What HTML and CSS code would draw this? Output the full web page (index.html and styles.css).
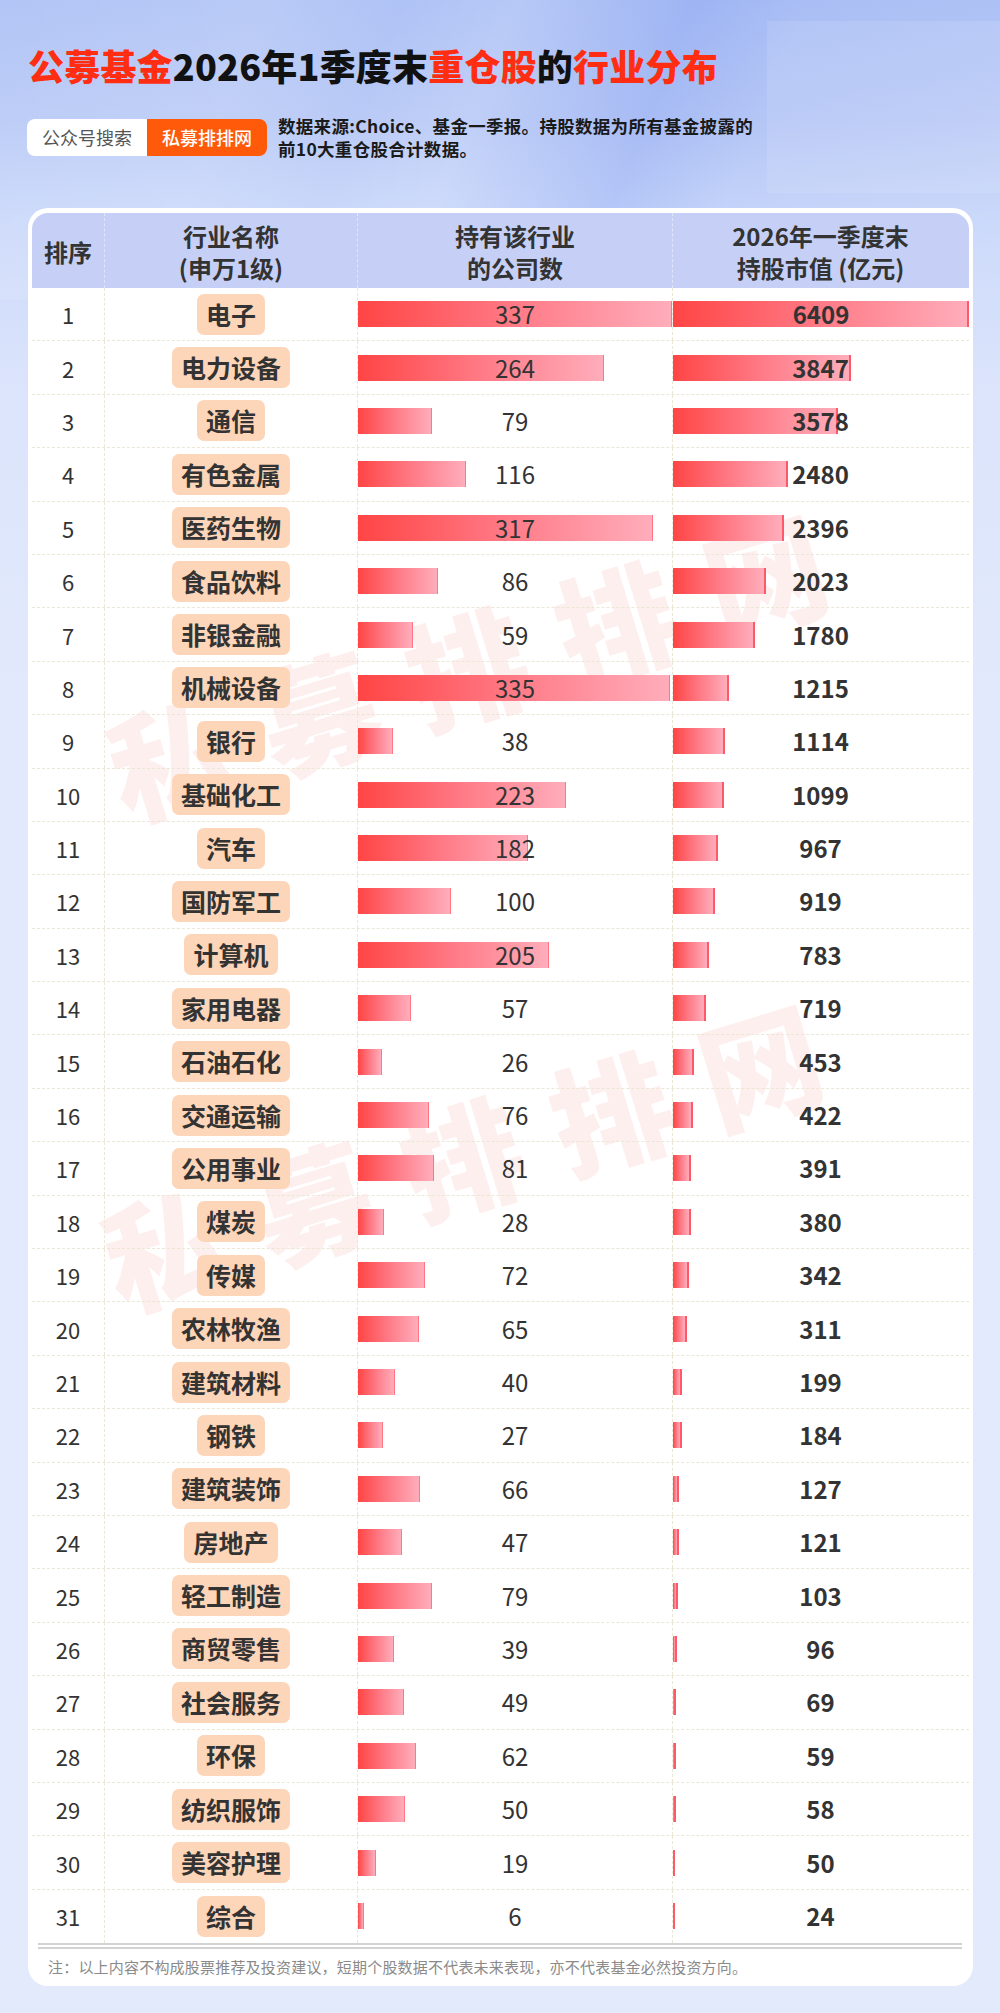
FILE: index.html
```html
<!DOCTYPE html>
<html lang="zh-CN">
<head>
<meta charset="utf-8">
<title>公募基金2026年1季度末重仓股的行业分布</title>
<link rel="stylesheet" href="styles.css">
</head>
<body>
<div class="page">
  <header class="top">
    <h1 class="title"><span class="red">公募基金</span>2026年1季度末<span class="red">重仓股</span>的<span class="red">行业分布</span></h1>
    <div class="meta">
      <div class="badge"><span class="badge-l">公众号搜索</span><span class="badge-r">私募排排网</span></div>
      <p class="source">数据来源:Choice、基金一季报。持股数据为所有基金披露的<br>前10大重仓股合计数据。</p>
    </div>
  </header>

  <section class="card">
    <div class="wm wm1">私募排排网</div>
    <div class="wm wm2">私募排排网</div>

    <div class="thead">
      <div class="th">排序</div>
      <div class="th">行业名称<br>(申万1级)</div>
      <div class="th">持有该行业<br>的公司数</div>
      <div class="th">2026年一季度末<br>持股市值 (亿元)</div>
    </div>

    <div class="tbody">
      <div class="row"><div class="c-rank">1</div><div class="c-name"><span class="pill">电子</span></div><div class="c-bar"><span class="bar" style="width:314px"></span><span class="num">337</span></div><div class="c-bar c-val"><span class="bar vbar" style="width:296px"></span><span class="num">6409</span></div></div>
      <div class="row"><div class="c-rank">2</div><div class="c-name"><span class="pill">电力设备</span></div><div class="c-bar"><span class="bar" style="width:246px"></span><span class="num">264</span></div><div class="c-bar c-val"><span class="bar vbar" style="width:177.7px"></span><span class="num">3847</span></div></div>
      <div class="row"><div class="c-rank">3</div><div class="c-name"><span class="pill">通信</span></div><div class="c-bar"><span class="bar" style="width:73.6px"></span><span class="num">79</span></div><div class="c-bar c-val"><span class="bar vbar" style="width:165.3px"></span><span class="num">3578</span></div></div>
      <div class="row"><div class="c-rank">4</div><div class="c-name"><span class="pill">有色金属</span></div><div class="c-bar"><span class="bar" style="width:108.1px"></span><span class="num">116</span></div><div class="c-bar c-val"><span class="bar vbar" style="width:114.5px"></span><span class="num">2480</span></div></div>
      <div class="row"><div class="c-rank">5</div><div class="c-name"><span class="pill">医药生物</span></div><div class="c-bar"><span class="bar" style="width:295.4px"></span><span class="num">317</span></div><div class="c-bar c-val"><span class="bar vbar" style="width:110.7px"></span><span class="num">2396</span></div></div>
      <div class="row"><div class="c-rank">6</div><div class="c-name"><span class="pill">食品饮料</span></div><div class="c-bar"><span class="bar" style="width:80.1px"></span><span class="num">86</span></div><div class="c-bar c-val"><span class="bar vbar" style="width:93.4px"></span><span class="num">2023</span></div></div>
      <div class="row"><div class="c-rank">7</div><div class="c-name"><span class="pill">非银金融</span></div><div class="c-bar"><span class="bar" style="width:55px"></span><span class="num">59</span></div><div class="c-bar c-val"><span class="bar vbar" style="width:82.2px"></span><span class="num">1780</span></div></div>
      <div class="row"><div class="c-rank">8</div><div class="c-name"><span class="pill">机械设备</span></div><div class="c-bar"><span class="bar" style="width:312.1px"></span><span class="num">335</span></div><div class="c-bar c-val"><span class="bar vbar" style="width:56.1px"></span><span class="num">1215</span></div></div>
      <div class="row"><div class="c-rank">9</div><div class="c-name"><span class="pill">银行</span></div><div class="c-bar"><span class="bar" style="width:35.4px"></span><span class="num">38</span></div><div class="c-bar c-val"><span class="bar vbar" style="width:51.5px"></span><span class="num">1114</span></div></div>
      <div class="row"><div class="c-rank">10</div><div class="c-name"><span class="pill">基础化工</span></div><div class="c-bar"><span class="bar" style="width:207.8px"></span><span class="num">223</span></div><div class="c-bar c-val"><span class="bar vbar" style="width:50.8px"></span><span class="num">1099</span></div></div>
      <div class="row"><div class="c-rank">11</div><div class="c-name"><span class="pill">汽车</span></div><div class="c-bar"><span class="bar" style="width:169.6px"></span><span class="num">182</span></div><div class="c-bar c-val"><span class="bar vbar" style="width:44.7px"></span><span class="num">967</span></div></div>
      <div class="row"><div class="c-rank">12</div><div class="c-name"><span class="pill">国防军工</span></div><div class="c-bar"><span class="bar" style="width:93.2px"></span><span class="num">100</span></div><div class="c-bar c-val"><span class="bar vbar" style="width:42.4px"></span><span class="num">919</span></div></div>
      <div class="row"><div class="c-rank">13</div><div class="c-name"><span class="pill">计算机</span></div><div class="c-bar"><span class="bar" style="width:191px"></span><span class="num">205</span></div><div class="c-bar c-val"><span class="bar vbar" style="width:36.2px"></span><span class="num">783</span></div></div>
      <div class="row"><div class="c-rank">14</div><div class="c-name"><span class="pill">家用电器</span></div><div class="c-bar"><span class="bar" style="width:53.1px"></span><span class="num">57</span></div><div class="c-bar c-val"><span class="bar vbar" style="width:33.2px"></span><span class="num">719</span></div></div>
      <div class="row"><div class="c-rank">15</div><div class="c-name"><span class="pill">石油石化</span></div><div class="c-bar"><span class="bar" style="width:24.2px"></span><span class="num">26</span></div><div class="c-bar c-val"><span class="bar vbar" style="width:20.9px"></span><span class="num">453</span></div></div>
      <div class="row"><div class="c-rank">16</div><div class="c-name"><span class="pill">交通运输</span></div><div class="c-bar"><span class="bar" style="width:70.8px"></span><span class="num">76</span></div><div class="c-bar c-val"><span class="bar vbar" style="width:19.5px"></span><span class="num">422</span></div></div>
      <div class="row"><div class="c-rank">17</div><div class="c-name"><span class="pill">公用事业</span></div><div class="c-bar"><span class="bar" style="width:75.5px"></span><span class="num">81</span></div><div class="c-bar c-val"><span class="bar vbar" style="width:18.1px"></span><span class="num">391</span></div></div>
      <div class="row"><div class="c-rank">18</div><div class="c-name"><span class="pill">煤炭</span></div><div class="c-bar"><span class="bar" style="width:26.1px"></span><span class="num">28</span></div><div class="c-bar c-val"><span class="bar vbar" style="width:17.6px"></span><span class="num">380</span></div></div>
      <div class="row"><div class="c-rank">19</div><div class="c-name"><span class="pill">传媒</span></div><div class="c-bar"><span class="bar" style="width:67.1px"></span><span class="num">72</span></div><div class="c-bar c-val"><span class="bar vbar" style="width:15.8px"></span><span class="num">342</span></div></div>
      <div class="row"><div class="c-rank">20</div><div class="c-name"><span class="pill">农林牧渔</span></div><div class="c-bar"><span class="bar" style="width:60.6px"></span><span class="num">65</span></div><div class="c-bar c-val"><span class="bar vbar" style="width:14.4px"></span><span class="num">311</span></div></div>
      <div class="row"><div class="c-rank">21</div><div class="c-name"><span class="pill">建筑材料</span></div><div class="c-bar"><span class="bar" style="width:37.3px"></span><span class="num">40</span></div><div class="c-bar c-val"><span class="bar vbar" style="width:9.2px"></span><span class="num">199</span></div></div>
      <div class="row"><div class="c-rank">22</div><div class="c-name"><span class="pill">钢铁</span></div><div class="c-bar"><span class="bar" style="width:25.2px"></span><span class="num">27</span></div><div class="c-bar c-val"><span class="bar vbar" style="width:8.5px"></span><span class="num">184</span></div></div>
      <div class="row"><div class="c-rank">23</div><div class="c-name"><span class="pill">建筑装饰</span></div><div class="c-bar"><span class="bar" style="width:61.5px"></span><span class="num">66</span></div><div class="c-bar c-val"><span class="bar vbar" style="width:5.9px"></span><span class="num">127</span></div></div>
      <div class="row"><div class="c-rank">24</div><div class="c-name"><span class="pill">房地产</span></div><div class="c-bar"><span class="bar" style="width:43.8px"></span><span class="num">47</span></div><div class="c-bar c-val"><span class="bar vbar" style="width:5.6px"></span><span class="num">121</span></div></div>
      <div class="row"><div class="c-rank">25</div><div class="c-name"><span class="pill">轻工制造</span></div><div class="c-bar"><span class="bar" style="width:73.6px"></span><span class="num">79</span></div><div class="c-bar c-val"><span class="bar vbar" style="width:4.8px"></span><span class="num">103</span></div></div>
      <div class="row"><div class="c-rank">26</div><div class="c-name"><span class="pill">商贸零售</span></div><div class="c-bar"><span class="bar" style="width:36.3px"></span><span class="num">39</span></div><div class="c-bar c-val"><span class="bar vbar" style="width:4.4px"></span><span class="num">96</span></div></div>
      <div class="row"><div class="c-rank">27</div><div class="c-name"><span class="pill">社会服务</span></div><div class="c-bar"><span class="bar" style="width:45.7px"></span><span class="num">49</span></div><div class="c-bar c-val"><span class="bar vbar" style="width:3.2px"></span><span class="num">69</span></div></div>
      <div class="row"><div class="c-rank">28</div><div class="c-name"><span class="pill">环保</span></div><div class="c-bar"><span class="bar" style="width:57.8px"></span><span class="num">62</span></div><div class="c-bar c-val"><span class="bar vbar" style="width:2.7px"></span><span class="num">59</span></div></div>
      <div class="row"><div class="c-rank">29</div><div class="c-name"><span class="pill">纺织服饰</span></div><div class="c-bar"><span class="bar" style="width:46.6px"></span><span class="num">50</span></div><div class="c-bar c-val"><span class="bar vbar" style="width:2.7px"></span><span class="num">58</span></div></div>
      <div class="row"><div class="c-rank">30</div><div class="c-name"><span class="pill">美容护理</span></div><div class="c-bar"><span class="bar" style="width:17.7px"></span><span class="num">19</span></div><div class="c-bar c-val"><span class="bar vbar" style="width:2.3px"></span><span class="num">50</span></div></div>
      <div class="row last"><div class="c-rank">31</div><div class="c-name"><span class="pill">综合</span></div><div class="c-bar"><span class="bar" style="width:5.6px"></span><span class="num">6</span></div><div class="c-bar c-val"><span class="bar vbar" style="width:1.6px"></span><span class="num">24</span></div></div>
    </div>

    <div class="foot">注：以上内容不构成股票推荐及投资建议，短期个股数据不代表未来表现，亦不代表基金必然投资方向。</div>
  </section>
</div>
</body>
</html>
```

FILE: styles.css
```css
* { box-sizing: border-box; }

html, body {
  margin: 0;
  padding: 0;
}

body {
  background: #e3eafc;
  font-family: "Noto Sans CJK SC", "Noto Sans", sans-serif;
  color: #333;
}

.page {
  width: 1000px;
  min-height: 2013px;
  padding-bottom: 27px;
  background:
    linear-gradient(112deg,
      rgba(255,255,255,0.06) 0%,
      rgba(255,255,255,0.14) 24%,
      rgba(255,255,255,0.02) 36%,
      rgba(255,255,255,0.12) 46%,
      rgba(80,115,235,0.16) 62%,
      rgba(80,115,235,0.04) 72%,
      rgba(255,255,255,0.04) 100%) 0 0 / 1000px 300px no-repeat,
    linear-gradient(180deg, #adc1f5 0px, #b8c9f6 120px, #cad8fa 220px, #dbe4fb 380px, #e2e9fc 700px, #e3eafc 100%);
}

/* ---------- top ---------- */
.top {
  position: relative;
  height: 208px;
  padding: 43px 0 0 28px;
}

.top::after {
  content: "";
  position: absolute;
  left: 767px;
  top: 21px;
  width: 233px;
  height: 172px;
  background: rgba(255,255,255,0.10);
}

.title {
  margin: 0;
  font-size: 36px;
  line-height: 44px;
  font-weight: 900;
  color: #111;
  letter-spacing: 0.2px;
}

.title .red { color: #ff2e12; }

.meta {
  display: flex;
  align-items: center;
  gap: 11px;
  margin-top: 27px;
  margin-left: -1px;
}

.badge {
  display: flex;
  height: 37px;
  border-radius: 8px;
  overflow: hidden;
  flex: none;
}

.badge-l,
.badge-r {
  width: 120px;
  display: flex;
  align-items: center;
  justify-content: center;
  font-size: 18px;
}

.badge-l {
  background: #fff;
  color: #555;
}

.badge-r {
  background: #ff5a0a;
  color: #fff;
  font-weight: 500;
}

.source {
  margin: 0;
  font-size: 17.5px;
  line-height: 23px;
  font-weight: 700;
  color: #1a1a1a;
  letter-spacing: 0.3px;
}

/* ---------- card ---------- */
.card {
  position: relative;
  margin-left: 28px;
  width: 945px;
  background: #fff;
  border-radius: 20px;
  padding: 5px 4px 5px;
  overflow: hidden;
}

.wm {
  position: absolute;
  z-index: 0;
  font-size: 120px;
  line-height: 1;
  font-weight: 900;
  letter-spacing: 36px;
  color: rgba(245, 70, 70, 0.085);
  white-space: nowrap;
  transform: translate(-50%, -50%) rotate(-17deg);
  pointer-events: none;
}

.wm1 { left: 455px; top: 450px; }
.wm2 { left: 450px; top: 940px; }

.thead,
.row {
  display: grid;
  grid-template-columns: 72px 253px 315px 296px;
  position: relative;
  z-index: 1;
}

.thead {
  height: 75px;
  background: #c6d0f6;
  border-radius: 16px 16px 0 0;
}

.th {
  display: flex;
  align-items: center;
  justify-content: center;
  text-align: center;
  font-size: 24px;
  line-height: 32px;
  font-weight: 700;
  color: #333;
  padding-top: 3px;
}

.th + .th {
  border-left: 1px dashed rgba(255,255,255,0.45);
}

.row {
  height: 53.4px;
  border-bottom: 1px dashed #ebe7d5;
}

.row.last { border-bottom: none; }

.c-rank {
  display: flex;
  align-items: center;
  justify-content: center;
  font-size: 22px;
  color: #333;
}

.c-name {
  display: flex;
  align-items: center;
  justify-content: center;
  border-left: 1px dashed #ebe7d5;
}

.pill {
  background: #fdd5b8;
  border-radius: 7px;
  padding: 4px 9px;
  font-size: 25px;
  line-height: 33px;
  font-weight: 700;
  color: #333;
}

.c-bar {
  display: grid;
  align-items: center;
  border-left: 1px dashed #ebe7d5;
}

.c-bar > .bar,
.c-bar > .num {
  grid-area: 1 / 1;
}

.bar {
  justify-self: start;
  height: 26px;
  background: linear-gradient(90deg, #ff4545 0%, #ff7a86 50%, #ffadbb 100%);
  border-right: 1px solid rgba(255, 140, 155, 0.7);
}

.vbar {
  min-width: 2px;
  border-right: 2px solid #ff5868;
}

.num {
  justify-self: center;
  font-size: 24px;
  line-height: 30px;
  color: #333;
  position: relative;
}

.c-val .num {
  font-weight: 700;
}

.foot {
  position: relative;
  z-index: 1;
  margin: 0 7px 0 6px;
  border-top: 6px double #d3d3d3;
  padding: 8px 0 4px 10px;
  font-size: 15px;
  line-height: 20px;
  color: #8a8a8a;
  letter-spacing: 0.2px;
}
```
